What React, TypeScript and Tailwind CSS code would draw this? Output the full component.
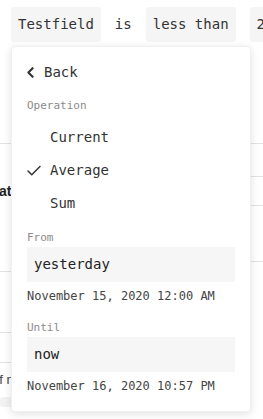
import React from 'react';
import { Check, ChevronLeft } from 'lucide-react';

const mono = { fontFamily: '"DejaVu Sans Mono", "Liberation Mono", monospace' };

/**
 * Grey pill used in the condition row
 */
function Chip({ children }: { children: React.ReactNode }) {
  return (
    <div className="h-[35px] px-[7px] flex items-center bg-[#f5f5f5] rounded-[3px] text-[14px] text-[#333] whitespace-nowrap">
      {children}
    </div>
  );
}

function OptionRow({ label, checked }: { label: string; checked?: boolean }) {
  return (
    <div className="h-[33px] flex items-center text-[14px] text-[#333]">
      <div className="w-[23px] flex items-center -ml-[2px]">
        {checked && <Check size={18} strokeWidth={2} className="text-[#333]" />}
      </div>
      <span className="ml-[2px]">{label}</span>
    </div>
  );
}

function RangeField({ label, value, date, first }: { label: string; value: string; date: string; first?: boolean }) {
  return (
    <div className={first ? 'mt-[10px]' : 'mt-[15px]'}>
      <div className="text-[11px] leading-[16px] text-[#8a8a8a]">{label}</div>
      <div className="mt-[1px] h-[35px] px-[7px] flex items-center bg-[#f6f6f6] text-[14px] text-[#222]">
        {value}
      </div>
      <div className="mt-[5px] text-[12px] leading-[18px] text-[#444]">{date}</div>
    </div>
  );
}

export default function App(): React.JSX.Element {
  return (
    <div className="relative w-[263px] h-[419px] overflow-hidden bg-white" style={mono}>
      {/* Condition row */}
      <div className="flex items-center pt-[7px] pl-[11px]">
        <Chip>Testfield</Chip>
        <span className="mx-[14px] text-[14px] text-[#333]">is</span>
        <Chip>less than</Chip>
        <div className="ml-[14px]">
          <Chip>20</Chip>
        </div>
      </div>

      {/* Table rows behind the popover */}
      <div className="flex mt-[101px]" style={{ fontFamily: '"Liberation Sans", Arial, sans-serif' }}>
        <div className="w-1/2">
          <div className="border-t border-[#e3e3e3] h-[128px] pt-[39px]">
            <span className="block leading-[16px] text-[14px] font-bold text-[#222] -ml-[15px]">Stat</span>
          </div>
          <div className="border-t border-[#e3e3e3] h-[61px]" />
          <div className="border-t border-[#e3e3e3] h-[30px]" />
          <div className="border-t border-[#e3e3e3] h-[30px] flex items-center">
            <span className="text-[13px] text-[#444] -ml-[8px] pt-[4px]">of no</span>
          </div>
          <div className="mt-[5px] h-[10px] w-[41px] bg-[#f2f2f2] rounded-[3px]" />
        </div>
        <div className="w-1/2">
          <div className="border-t border-[#e3e3e3] h-[33px]" />
          <div className="border-t border-[#e3e3e3] h-[29px]" />
          <div className="border-t border-[#e3e3e3] h-[56px]" />
          <div className="border-t border-[#e3e3e3] h-[30px]" />
        </div>
      </div>

      {/* Popover */}
      <div className="absolute left-[11px] top-[46px] w-[240px] bg-white rounded-[4px] border border-[#f0f0f0] shadow-[0_2px_8px_rgba(0,0,0,0.12)] px-[15px] pt-[12px] pb-[16px]">
        <div className="h-[26px] flex items-center text-[14px] text-[#333]">
          <ChevronLeft size={17} strokeWidth={3} className="-ml-[5px] text-[#333]" />
          <span className="ml-[5px]">Back</span>
        </div>
        <div className="mt-[13px] text-[11px] leading-[16px] text-[#8a8a8a]">Operation</div>
        <div className="mt-[7px]">
          <OptionRow label="Current" />
          <OptionRow label="Average" checked />
          <OptionRow label="Sum" />
        </div>
        <RangeField first label="From" value="yesterday" date="November 15, 2020 12:00 AM" />
        <RangeField label="Until" value="now" date="November 16, 2020 10:57 PM" />
      </div>
    </div>
  );
}
